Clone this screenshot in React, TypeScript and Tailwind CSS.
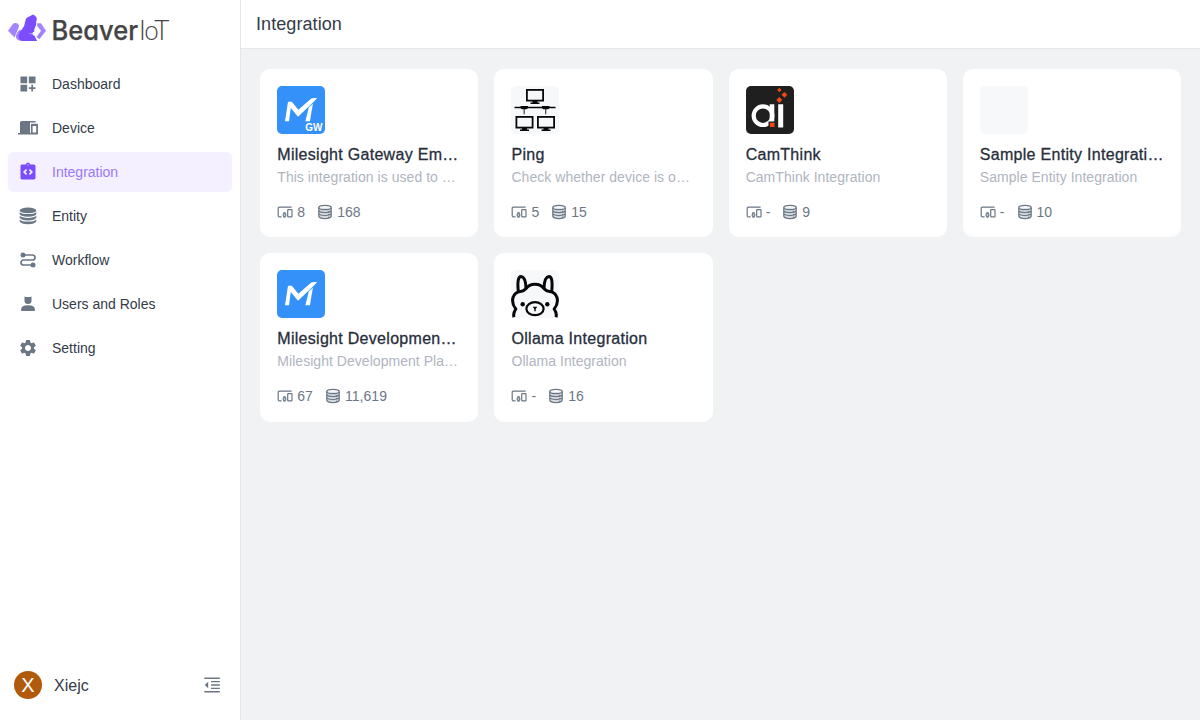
import React from 'react';
import { MdDashboardCustomize, MdIntegrationInstructions, MdSettings } from 'react-icons/md';

function Logo() {
  return (
    <svg width="180" height="56" viewBox="0 0 180 56" className="block overflow-visible">
      <path d="M8 30.7 12.6 24.400Q13.6 23.100 15.400 23.100Q18.200 23.100 18.900 25.200Q19.200 27 18 29L14.600 37.400Z" fill="#a284fb" />
      <path d="M16 35.600Q15.400 41 22 41L26 35 20 29.500Q16.600 32 16 35.600Z" fill="#a284fb" />
      <path d="M32.800 14.500Q35.400 15.600 36.700 17.800Q37 20 36.200 21.400Q36.800 24.500 34.900 27.400Q34 29.600 34.300 31.600L32.600 32.600Q32 33.600 33.200 35.200L34.800 36Q35.400 38.600 37 40.400V41H22.400Q18 39.800 18.700 35.500Q19.300 32 22 29.200Q24.900 25.600 25.200 21.400Q25.400 18.400 28 17.100Q30.400 16 32.800 14.500Z" fill="#7b4dff" />
      <path d="M29.500 33.600 34.600 34.200" stroke="#fff" strokeWidth=".5" fill="none" />
      <path d="M37.400 23.300H41L46 30.700 39.400 39.200 36.400 37 41 30.800 37 25.800Z" fill="#a284fb" />
      <text x="51.600" y="40" fontSize="26.400" fontWeight="500" fill="#444" stroke="#444" strokeWidth=".25" textLength="86.400" lengthAdjust="spacingAndGlyphs" className="font-['Inter',sans-serif] [font-feature-settings:'cv11']">Beaver</text>
      <text x="139" y="40" fontSize="26.600" fontWeight="300" fill="#444" textLength="29.200" lengthAdjust="spacingAndGlyphs" className="font-['Lato',sans-serif] tracking-[-1.200px]">IoT</text>
    </svg>
  );
}

function DeviceIcon() {
  return (
    <svg width="20" height="20" viewBox="0 0 20 20" fill="currentColor">
      <path d="M3.600 3h14v1.500H12V15h1v1.600H0V15h2V4.600Q2 3 3.600 3Z" />
      <path fillRule="evenodd" d="M13.700 5.700h5.500q.8 0 .8.800v9.300q0 .8-.8.8h-5.500q-.8 0-.8-.8V6.500q0-.8.8-.8Zm.9 2.200v6.700h3.600V7.900Z" />
    </svg>
  );
}

function EntityIcon() {
  return (
    <svg width="20" height="20" viewBox="0 0 20 20" fill="currentColor">
      <ellipse cx="10" cy="4.400" rx="8.400" ry="2.800" />
      <path d="M1.600 6.200Q4 8.100 10 8.100T18.400 6.200V8Q17 10.700 10 10.700T1.600 8Z" />
      <path d="M1.600 9.800Q4 11.900 10 11.900T18.400 9.800V11.500Q17 14.400 10 14.400T1.600 11.500Z" />
      <path d="M1.600 13.400Q4 15.600 10 15.600T18.400 13.400V15Q17 18.200 10 18.200T1.600 15Z" />
    </svg>
  );
}

function WorkflowIcon() {
  return (
    <svg width="20" height="20" viewBox="0 0 20 20" fill="none" stroke="currentColor" strokeWidth="1.700">
      <path d="M5 5h9.500a2.500 2.500 0 0 1 0 5h-9a2.500 2.500 0 0 0 0 5H15" />
      <circle cx="5" cy="5" r="2.500" fill="currentColor" stroke="none" />
      <circle cx="15" cy="15" r="2.500" fill="currentColor" stroke="none" />
    </svg>
  );
}

function UsersIcon() {
  return (
    <svg width="20" height="20" viewBox="0 0 20 20" fill="currentColor">
      <path d="M6.500 2.400 8 3h4l1.500-.6V7q0 3-3.500 3T6.500 7Z" />
      <path d="M3.200 17v-1.800Q3.200 11.300 10 11.300t6.800 3.900V17Z" />
    </svg>
  );
}

function CollapseIcon() {
  return (
    <svg width="20" height="20" viewBox="0 0 20 20" fill="currentColor">
      <path d="M2.300 2.500h15.500V4H2.300zM9 5.900h8.800v1.400H9zM9 9.300h8.800v1.400H9zM9 12.700h8.800v1.400H9zM2.300 16h15.500v1.500H2.300zM6.200 6.800v6.400L2.700 10z" />
    </svg>
  );
}

function SmallDevices() {
  return (
    <svg width="16" height="16" viewBox="0 0 16 16" fill="none" stroke="currentColor" strokeWidth="1.200">
      <path d="M14.600 3.200H2.200Q1.200 3.200 1.200 4.200v7.500q0 1.100 1.100 1.100h2.300" />
      <rect x="10.700" y="5.600" width="4.300" height="7.300" rx=".6" />
      <circle cx="7.500" cy="11" r="1.400" />
      <path d="M6.600 9.700V8.500h1.800v1.200M6.600 12.300v1h1.800v-1" strokeWidth=".8" />
    </svg>
  );
}

function SmallDatabase() {
  return (
    <svg width="16" height="16" viewBox="0 0 16 16" fill="none" stroke="currentColor" strokeWidth="1.250">
      <path d="M1.800 3.700v8.600Q2.500 14.500 8 14.500t6.200-2.200V3.700Z" fill="currentColor" fillOpacity=".22" stroke="none" />
      <ellipse cx="8" cy="3.500" rx="6.200" ry="2.200" />
      <path d="M1.800 3.500v8.800Q2.500 14.500 8 14.500t6.200-2.200V3.500M1.800 6.500Q2.500 8.600 8 8.600t6.200-2.100M1.800 9.400Q2.500 11.500 8 11.500t6.200-2.100" />
      <path d="M10.900 7.400h1.500M10.900 10.300h1.500M10.900 13.100h1.500" strokeWidth="1" />
    </svg>
  );
}

function MilesightIcon({ gateway = false }: { gateway?: boolean }) {
  return (
    <svg width="48" height="48" viewBox="0 0 48 48">
      <rect width="48" height="48" rx="5" fill="#3491fa" />
      <path d="M8 35.200 11 15.700H14.800L21.300 23.800 34 12.800Q35 12 37 12H40.200L35.800 16.800 21 30.700 13.800 22 12 35.200Z" fill="#fff" />
      <path d="M31.800 21.600 35.900 17.800 32.900 35.200H28.400Z" fill="#fff" />
      {gateway && <text x="28.300" y="45.300" fontSize="10" fontWeight="700" fill="#fff" textLength="17.200" className="font-['Liberation_Sans',sans-serif]">GW</text>}
    </svg>
  );
}

function Monitor({ x, y }: { x: number; y: number }) {
  return (
    <g transform={`translate(${x} ${y})`}>
      <rect x=".9" y=".9" width="16.200" height="10.700" fill="none" stroke="#080808" strokeWidth="1.800" />
      <path d="M6.500 12h5v1.500h2v1.500h-9v-1.500h2z" fill="#080808" />
    </g>
  );
}

function PingIcon() {
  return (
    <svg width="48" height="48" viewBox="0 0 48 48">
      <rect width="48" height="48" rx="5" fill="#f7f8fa" />
      <Monitor x={15} y={3} />
      <Monitor x={4.500} y={30} />
      <Monitor x={26} y={30} />
      <path d="M3.500 20.700h41v1.500h-41zM9.500 20h7.500v2.300l-1.500 1h-4.500l-1.500-1zM31 20h7.500v2.300l-1.500 1h-4.500l-1.500-1z" fill="#080808" />
      <path d="M13.200 23v5.300M34.700 23v5.300" stroke="#444" strokeWidth="1.200" />
    </svg>
  );
}

function CamThinkIcon() {
  return (
    <svg width="48" height="48" viewBox="0 0 48 48">
      <rect width="48" height="48" rx="5" fill="#1f1f1f" />
      <circle cx="17" cy="29.700" r="9.300" fill="none" stroke="#fff" strokeWidth="4.200" />
      <path d="M23.700 18.300h4.600v17.400h-4.600zM32.200 18.300h5v23.200h-5z" fill="#fff" />
      <path d="M22.500 35.500h6.500V42h-6.500z" fill="#1f1f1f" />
      <path d="M24 36.700h4.500V41H24zM33.300 1.800l2.200 2.200-2.200 2.200L31.100 4zM38.400 5.900l2.900 2.900-2.900 2.900-2.900-2.900zM33.300 10.900l3 3-3 3-3-3z" fill="#f04a12" />
    </svg>
  );
}

function OllamaIcon() {
  return (
    <svg width="48" height="48" viewBox="0 0 48 48" fill="none" stroke="#080808" strokeWidth="3" strokeLinejoin="round">
      <rect width="48" height="48" rx="5" fill="#f7f8fa" stroke="none" />
      <path d="M3 47.200Q1.800 43.500 4.800 39Q.4 33.500 2 27.500Q3.800 22 9.200 21.400Q12.500 21.600 14.800 18.800Q18 14.200 24 14.200T33.200 18.800Q35.500 21.600 38.800 21.400Q44.200 22 46 27.500Q47.600 33.500 43.200 39Q46.200 43.500 45 47.200" />
      <path d="M7.300 21.500Q5.800 6.400 10 6.400Q14.700 6.800 15 18.500M40.700 21.500Q42.200 6.400 38 6.400Q33.300 6.800 33 18.500" />
      <ellipse cx="24" cy="38.700" rx="8.600" ry="6.500" strokeWidth="2.200" />
      <circle cx="11.700" cy="34.300" r="2.200" fill="#080808" stroke="none" />
      <circle cx="36.300" cy="34.300" r="2.200" fill="#080808" stroke="none" />
      <path d="M21.700 36.800h4.600L24.700 39v2.300h-1.400V39Z" fill="#080808" stroke="none" />
    </svg>
  );
}

const navItems = [
  { label: 'Dashboard', icon: <MdDashboardCustomize size={20} /> },
  { label: 'Device', icon: <DeviceIcon /> },
  { label: 'Integration', icon: <MdIntegrationInstructions size={20} />, active: true },
  { label: 'Entity', icon: <EntityIcon /> },
  { label: 'Workflow', icon: <WorkflowIcon /> },
  { label: 'Users and Roles', icon: <UsersIcon /> },
  { label: 'Setting', icon: <MdSettings size={20} /> },
];

const integrations = [
  { title: 'Milesight Gateway Em…', text: 'This integration is used to …', devices: '8', entities: '168', icon: <MilesightIcon gateway /> },
  { title: 'Ping', text: 'Check whether device is o…', devices: '5', entities: '15', icon: <PingIcon /> },
  { title: 'CamThink', text: 'CamThink Integration', devices: '-', entities: '9', icon: <CamThinkIcon /> },
  { title: 'Sample Entity Integrati…', text: 'Sample Entity Integration', devices: '-', entities: '10', icon: <div className="size-12 rounded-[5px] bg-[#f7f8fa]" /> },
  { title: 'Milesight Developmen…', text: 'Milesight Development Pla…', devices: '67', entities: '11,619', icon: <MilesightIcon /> },
  { title: 'Ollama Integration', text: 'Ollama Integration', devices: '-', entities: '16', icon: <OllamaIcon /> },
];

export default function App() {
  return (
    <div className="flex h-[720px] w-[1200px] overflow-hidden bg-[#f1f2f4] font-['Liberation_Sans',Arial,sans-serif] text-[#343b49]">
      <aside className="flex w-[241px] shrink-0 flex-col border-r border-[#e5e6eb] bg-white">
        <div className="h-16 shrink-0">
          <Logo />
        </div>
        <nav className="flex flex-col gap-1 px-2">
          {navItems.map((item) => (
            <a
              key={item.label}
              className={`flex h-10 items-center gap-[14px] rounded-md pl-[10px] text-sm ${item.active ? 'bg-[#f4f0ff] text-[#9a78fa]' : ''}`}
            >
              <span className={item.active ? 'text-[#7b4dff]' : 'text-[#6b7785]'}>{item.icon}</span>
              {item.label}
            </a>
          ))}
        </nav>
        <div className="mt-auto flex h-[70px] items-center pr-[18px] pl-[14px]">
          <span className="flex size-7 items-center justify-center rounded-full bg-[#b25a0c] text-xl leading-none text-white">X</span>
          <span className="ml-3 pt-[2px] text-base">Xiejc</span>
          <span className="ml-auto text-[#6b7785]"><CollapseIcon /></span>
        </div>
      </aside>
      <main className="min-w-0 flex-1">
        <header className="flex h-[49px] items-center border-b border-[#e5e6eb] bg-white pl-[15px] text-lg tracking-[0.080px]">
          <h1>Integration</h1>
        </header>
        <section className="grid grid-cols-4 gap-4 pt-5 pr-[19px] pl-[19.300px]">
          {integrations.map((card) => (
            <article key={card.title} className="h-[168.300px] min-w-0 rounded-[10px] bg-white px-[17px] pt-[17px]">
              {card.icon}
              <h2 className="mt-[9px] overflow-hidden text-base leading-6 tracking-[0.290px] whitespace-nowrap text-[#272e3b] [-webkit-text-stroke:0.300px_currentColor]">{card.title}</h2>
              <p className="-mt-px overflow-hidden text-sm leading-[22px] tracking-[0.040px] whitespace-nowrap text-[#b0b5c0]">{card.text}</p>
              <div className="mt-[14px] flex h-5 items-center text-sm tracking-[0.040px] text-[#6b7785]">
                <SmallDevices />
                <span className="ml-1">{card.devices}</span>
                <span className="ml-3"><SmallDatabase /></span>
                <span className="ml-1">{card.entities}</span>
              </div>
            </article>
          ))}
        </section>
      </main>
    </div>
  );
}
